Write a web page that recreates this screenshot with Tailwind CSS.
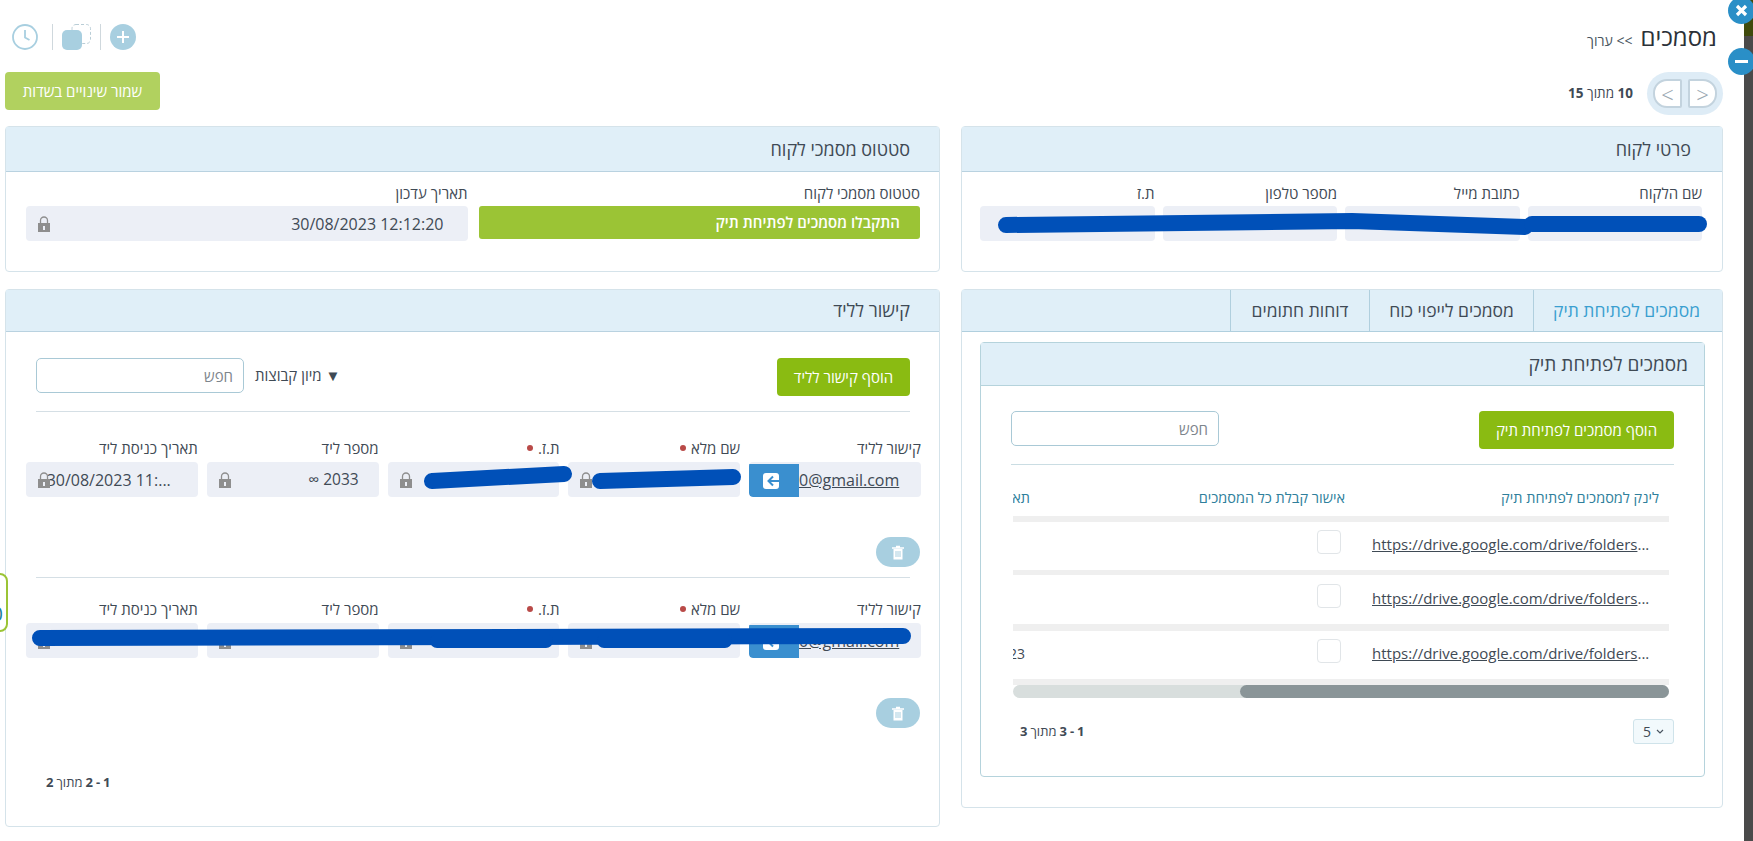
<!DOCTYPE html>
<html lang="he" dir="rtl">
<head>
  <meta charset="UTF-8">
  <title>מסמכים</title>
  <script src="https://cdn.jsdelivr.net/npm/@tailwindcss/browser@4"></script>
</head>
<body class="h-[841px] w-[1753px] overflow-hidden bg-white font-['Open_Sans','Noto_Sans',sans-serif] text-[#3f4a55]">
  <div class="relative flex h-[841px]">

    <!-- dark page behind the popup -->
    <div class="order-first h-[841px] w-[9px] shrink-0 bg-[#4a4a4a]">
      <div class="h-[36px] bg-[#3f4a0c]"></div>
    </div>

    <!-- popup -->
    <main class="w-[1744px] shrink-0 pr-[21px] pl-[5px]">
      <!-- title row -->
      <div class="flex h-[72px] items-start justify-between">
        <div class="flex items-baseline gap-2 pt-[19px] pr-[6px]">
          <h1 class="text-[24px] leading-[36px] text-[#2b3138]">מסמכים</h1>
          <span class="text-[14px] text-[#4a5560]">&gt;&gt; ערוך</span>
        </div>
        <div class="flex items-center pt-[24px] pl-[7px]">
          <svg class="h-[26px] w-[26px]" viewBox="0 0 26 26" fill="none"><circle cx="13" cy="13" r="13" fill="#a8cfe0"/><path d="M13 7v12M7 13h12" stroke="#fff" stroke-width="2"/></svg>
          <div class="mr-[9px] ml-[9px] h-[26px] w-px bg-[#cfd8dd]"></div>
          <svg class="h-[26px] w-[29px]" viewBox="0 0 29 26" fill="none"><rect x="10" y="0.500" width="18.500" height="19" rx="4" stroke="#b9cdd6" stroke-dasharray="3 2"/><rect x="0" y="6" width="20" height="20" rx="5" fill="#a8cfe0"/></svg>
          <div class="mr-[9px] ml-[14px] h-[26px] w-px bg-[#cfd8dd]"></div>
          <svg class="h-[26px] w-[26px]" viewBox="0 0 26 26" fill="none"><circle cx="13" cy="13" r="12" stroke="#a8cfe0" stroke-width="1.800"/><path d="M13 6v7.500l4.500 2.500" stroke="#a8cfe0" stroke-width="1.800"/></svg>
        </div>
      </div>

      <!-- paging + save -->
      <div class="flex h-[54px] items-start justify-between">
        <div class="flex items-center gap-[14px]">
          <div class="flex h-[43px] w-[76px] items-center justify-center gap-[6px] rounded-full bg-[#deecf6]">
            <button dir="ltr" class="h-[29px] w-[29px] rounded-r-[14px] rounded-l-[2px] border-2 border-[#c3d3de] bg-white text-[22px] leading-none font-light text-[#98a6b0]">&gt;</button>
            <button dir="ltr" class="h-[29px] w-[29px] rounded-l-[14px] rounded-r-[2px] border-2 border-[#c3d3de] bg-white text-[22px] leading-none font-light text-[#98a6b0]">&lt;</button>
          </div>
          <span class="text-[13.500px] text-[#3f4a55]"><b>10</b> מתוך <b>15</b></span>
        </div>
        <button class="h-[38px] w-[155px] rounded-[4px] bg-[#b1d15f] text-[15px] font-medium text-white">שמור שינויים בשדות</button>
      </div>

      <!-- two columns -->
      <div class="grid grid-cols-[762px_935px] gap-[21px]">

        <!-- right column -->
        <div class="flex flex-col gap-[17px]">
          <section class="relative h-[146px] rounded-[4px] border border-[#d5e3ea]">
            <div class="flex h-[45px] items-center border-b border-[#b9d2e0] bg-[#e0eff8] pr-[31px] text-[18px]">פרטי לקוח</div>
            <div class="grid grid-cols-4 gap-[8px] pt-[12px] pr-[20px] pl-[18px]">
              <div><label class="mb-[4px] block text-[15px] leading-[18px]">שם הלקוח</label><div class="h-[35px] rounded-[4px] bg-[#eceff6]"></div></div>
              <div><label class="mb-[4px] block text-[15px] leading-[18px]">כתובת מייל</label><div class="h-[35px] rounded-[4px] bg-[#eceff6]"></div></div>
              <div><label class="mb-[4px] block text-[15px] leading-[18px]">מספר טלפון</label><div class="h-[35px] rounded-[4px] bg-[#eceff6]"></div></div>
              <div><label class="mb-[4px] block text-[15px] leading-[18px]">ת.ז</label><div class="h-[35px] rounded-[4px] bg-[#eceff6]"></div></div>
            </div>
            <!-- scribble over the client details -->
            <svg class="absolute top-0 left-0 h-[146px] w-[760px]" viewBox="0 0 760 146" fill="none"><path d="M44 98L390 94L563 100" stroke="#0050b8" stroke-width="16" stroke-linecap="round" stroke-linejoin="round"/><path d="M570 97H737" stroke="#0050b8" stroke-width="16" stroke-linecap="round"/></svg>
          </section>

          <section class="h-[519px] rounded-[4px] border border-[#d5e3ea]">
            <div class="flex h-[42px] border-b border-[#b0cfde] bg-[#e0eff8] text-[17.500px]">
              <div class="flex w-[189px] items-center border-l border-[#b0cfde] pr-[22px] text-[#3a9fd0]">מסמכים לפתיחת תיק</div>
              <div class="flex w-[164px] items-center justify-center border-l border-[#b0cfde]">מסמכים לייפוי כוח</div>
              <div class="flex w-[139px] items-center justify-center border-l border-[#b0cfde]">דוחות חתומים</div>
            </div>

            <div class="mt-[10px] mr-[17px] ml-[18px] h-[435px] rounded-[4px] border border-[#b5d3dc]">
              <div class="flex h-[43px] items-center border-b border-[#b5d3dc] bg-[#e0eff8] pr-[16px] text-[19px]">מסמכים לפתיחת תיק</div>
              <div class="flex items-start justify-between pt-[25px] pr-[30px] pl-[30px]">
                <button class="h-[38px] w-[195px] rounded-[4px] bg-[#8abb12] text-[15px] font-medium text-white">הוסף מסמכים לפתיחת תיק</button>
                <input class="h-[35px] w-[208px] rounded-[5px] border border-[#a9c9d6] px-[10px] text-[15px] placeholder:text-[#7d858c]" placeholder="חפש">
              </div>
              <div class="mx-[30px] mt-[15px] h-px bg-[#cadde3]"></div>

              <!-- table -->
              <div class="mt-[15px] mr-[35px] ml-[35px] w-[656px] overflow-hidden">
                <div class="flex h-[36px] items-center text-[14.500px] whitespace-nowrap text-[#2f7f9c]">
                  <div class="w-[324px] pr-[10px]">לינק למסמכים לפתיחת תיק</div>
                  <div class="w-[315px]">אישור קבלת כל המסמכים</div>
                  <div class="w-[17px] overflow-hidden">תאריך</div>
                </div>
                <div class="bg-[#efefef] pt-[6px]">
                  <div class="flex h-[48px] items-center bg-white">
                    <div class="mr-[21px] mb-[3px] w-[276px] text-[15px] whitespace-nowrap" dir="ltr"><a class="underline">https://drive.google.com/drive/folders</a>...</div>
                    <div class="mr-[31px] mb-[8px] h-[24px] w-[24px] rounded-[4px] border border-[#e1e5e8] bg-white"></div>
                  </div>
                  <div class="mt-[5px] flex h-[49px] items-center bg-white">
                    <div class="mr-[21px] mb-[3px] w-[276px] text-[15px] whitespace-nowrap" dir="ltr"><a class="underline">https://drive.google.com/drive/folders</a>...</div>
                    <div class="mr-[31px] mb-[8px] h-[24px] w-[24px] rounded-[4px] border border-[#e1e5e8] bg-white"></div>
                  </div>
                  <div class="mt-[7px] flex h-[48px] items-center bg-white">
                    <div class="mr-[21px] mb-[3px] w-[276px] text-[15px] whitespace-nowrap" dir="ltr"><a class="underline">https://drive.google.com/drive/folders</a>...</div>
                    <div class="mr-[31px] mb-[8px] h-[24px] w-[24px] rounded-[4px] border border-[#e1e5e8] bg-white"></div>
                    <div class="mr-auto mb-[3px] w-[12px] overflow-hidden text-[14px] whitespace-nowrap" dir="rtl">23</div>
                  </div>
                  <div class="h-[6px]"></div>
                </div>
                <div class="flex h-[13px] justify-start rounded-full bg-[#d8dedd]">
                  <div class="h-[13px] w-[429px] rounded-full bg-[#8a9598]"></div>
                </div>
              </div>

              <div class="mt-[21px] flex items-center justify-between pr-[30px] pl-[39px]">
                <div class="flex h-[25px] w-[41px] items-center justify-center gap-[5px] rounded-[3px] border border-[#cfe3ea] bg-[#f2f9fc] text-[14px]"><svg class="h-[6px] w-[8px]" viewBox="0 0 8 6" fill="none"><path d="M1 1l3 3 3-3" stroke="#4a5560" stroke-width="1.200"/></svg><span>5</span></div>
                <span class="flex gap-[3px] text-[13px]"><b>1</b><b>-</b><b>3</b><span>מתוך</span><b>3</b></span>
              </div>
            </div>
          </section>
        </div>

        <!-- left column -->
        <div class="flex flex-col gap-[17px]">
          <section class="h-[146px] rounded-[4px] border border-[#d5e3ea]">
            <div class="flex h-[45px] items-center border-b border-[#b9d2e0] bg-[#e0eff8] pr-[29px] text-[18px]">סטטוס מסמכי לקוח</div>
            <div class="grid grid-cols-2 gap-[11px] pt-[12px] pr-[19px] pl-[20px]">
              <div>
                <label class="mb-[4px] block text-[15px] leading-[18px]">סטטוס מסמכי לקוח</label>
                <div class="mt-px flex h-[33px] items-center rounded-[3px] bg-[#9bc435] pr-[20px] text-[15px] font-semibold text-white">התקבלו מסמכים לפתיחת תיק</div>
              </div>
              <div>
                <label class="mb-[4px] block text-[15px] leading-[18px]">תאריך עדכון</label>
                <div class="flex h-[35px] items-center justify-between rounded-[4px] bg-[#eceff6] pr-[24px] pl-[12px] text-[16px]">
                  <span dir="ltr">30/08/2023 12:12:20</span>
                  <svg class="h-[16px] w-[12px]" viewBox="0 0 12 16" fill="none"><path d="M2.500 8V4.500a3.500 3.500 0 0 1 7 0V8" stroke="#8e8e8e" stroke-width="1.300"/><path fill-rule="evenodd" d="M0 7h12v9H0zM5 10h2v4H5z" fill="#8e8e8e"/></svg>
                </div>
              </div>
            </div>
          </section>

          <section class="relative h-[538px] rounded-[4px] border border-[#d5e3ea]">
            <div class="flex h-[42px] items-center border-b border-[#b9d2e0] bg-[#e0eff8] pr-[29px] text-[18px]">קישור לליד</div>

            <div class="flex items-start justify-between pt-[26px] pr-[29px] pl-[30px]">
              <button class="h-[38px] w-[133px] rounded-[4px] bg-[#8abb12] text-[15px] font-medium text-white">הוסף קישור לליד</button>
              <div class="flex items-center gap-[11px]">
                <span class="text-[15px]">▼ מיון קבוצות</span>
                <input class="h-[35px] w-[208px] rounded-[5px] border border-[#a9c9d6] px-[10px] text-[15px] placeholder:text-[#7d858c]" placeholder="חפש">
              </div>
            </div>
            <div class="mt-[15px] mr-[29px] ml-[30px] h-px bg-[#d5dfe5]"></div>

            <!-- lead row 1 -->
            <div class="grid grid-cols-5 gap-[9px] pt-[26px] pr-[18px] pl-[20px]">
              <div>
                <label class="mb-[4px] block text-[15px] leading-[20px]">קישור לליד</label>
                <div class="flex h-[35px] items-center overflow-hidden rounded-[4px] bg-[#eceff6] pr-[20px]">
                  <a class="w-[102px] shrink-0 overflow-hidden text-[16px] whitespace-nowrap underline" dir="ltr">0@gmail.com</a>
                  <div class="mt-[2px] flex h-[33px] w-[50px] items-center justify-center rounded-bl-[4px] bg-[#3a8fcf]">
                    <svg class="h-[20px] w-[22px]" viewBox="0 0 22 20" fill="none"><rect width="16" height="16" y="2" rx="3" fill="#fff"/><path d="M21 10H6M10 5.500L5.500 10l4.500 4.500" stroke="#3a8fcf" stroke-width="2"/></svg>
                  </div>
                </div>
              </div>
              <div>
                <label class="mb-[4px] flex items-center gap-[5px] text-[15px] leading-[20px]">שם מלא <i class="h-[6px] w-[6px] rounded-full bg-[#b94a48]"></i></label>
                <div class="flex h-[35px] items-center justify-end rounded-[4px] bg-[#eceff6] pl-[12px]">
                  <svg class="h-[16px] w-[12px]" viewBox="0 0 12 16" fill="none"><path d="M2.500 8V4.500a3.500 3.500 0 0 1 7 0V8" stroke="#8e8e8e" stroke-width="1.300"/><path fill-rule="evenodd" d="M0 7h12v9H0zM5 10h2v4H5z" fill="#8e8e8e"/></svg>
                </div>
              </div>
              <div>
                <label class="mb-[4px] flex items-center gap-[5px] text-[15px] leading-[20px]">ת.ז. <i class="h-[6px] w-[6px] rounded-full bg-[#b94a48]"></i></label>
                <div class="flex h-[35px] items-center justify-end rounded-[4px] bg-[#eceff6] pl-[12px]">
                  <svg class="h-[16px] w-[12px]" viewBox="0 0 12 16" fill="none"><path d="M2.500 8V4.500a3.500 3.500 0 0 1 7 0V8" stroke="#8e8e8e" stroke-width="1.300"/><path fill-rule="evenodd" d="M0 7h12v9H0zM5 10h2v4H5z" fill="#8e8e8e"/></svg>
                </div>
              </div>
              <div>
                <label class="mb-[4px] block text-[15px] leading-[20px]">מספר ליד</label>
                <div class="flex h-[35px] items-center justify-between rounded-[4px] bg-[#eceff6] pr-[20px] pl-[12px]">
                  <span class="text-[15.500px]" dir="ltr">∞ 2033</span>
                  <svg class="h-[16px] w-[12px]" viewBox="0 0 12 16" fill="none"><path d="M2.500 8V4.500a3.500 3.500 0 0 1 7 0V8" stroke="#8e8e8e" stroke-width="1.300"/><path fill-rule="evenodd" d="M0 7h12v9H0zM5 10h2v4H5z" fill="#8e8e8e"/></svg>
                </div>
              </div>
              <div>
                <label class="mb-[4px] block text-[15px] leading-[20px]">תאריך כניסת ליד</label>
                <div class="relative flex h-[35px] items-center rounded-[4px] bg-[#eceff6] pr-[27px]">
                  <span class="text-[16px] whitespace-nowrap" dir="ltr">30/08/2023 11:...</span>
                  <svg class="absolute top-[10px] left-[12px] h-[16px] w-[12px]" viewBox="0 0 12 16" fill="none"><path d="M2.500 8V4.500a3.500 3.500 0 0 1 7 0V8" stroke="#8e8e8e" stroke-width="1.300"/><path fill-rule="evenodd" d="M0 7h12v9H0zM5 10h2v4H5z" fill="#8e8e8e"/></svg>
                </div>
              </div>
            </div>
            <div class="mt-[40px] flex justify-start pr-[19px]">
              <button class="flex h-[30px] w-[44px] items-center justify-center rounded-full bg-[#a8cfe0]">
                <svg class="h-[15px] w-[12px]" viewBox="0 0 12 15" fill="none"><path d="M4 2V1h4v1M0 2.500h12M1.500 4h9v10.500h-9z" fill="#fff"/><path d="M0 3h12M4 1.500h4" stroke="#fff" stroke-width="1.500"/><path d="M4 6v6M6 6v6M8 6v6" stroke="#a8cfe0"/></svg>
              </button>
            </div>
            <div class="mt-[10px] mr-[29px] ml-[30px] h-px bg-[#d5dfe5]"></div>

            <!-- lead row 2 -->
            <div class="grid grid-cols-5 gap-[9px] pt-[21px] pr-[18px] pl-[20px]">
              <div>
                <label class="mb-[4px] block text-[15px] leading-[20px]">קישור לליד</label>
                <div class="flex h-[35px] items-center overflow-hidden rounded-[4px] bg-[#eceff6] pr-[20px]">
                  <a class="w-[102px] shrink-0 overflow-hidden text-[16px] whitespace-nowrap underline" dir="ltr">0@gmail.com</a>
                  <div class="mt-[2px] flex h-[33px] w-[50px] items-center justify-center rounded-bl-[4px] bg-[#3a8fcf]">
                    <svg class="h-[20px] w-[22px]" viewBox="0 0 22 20" fill="none"><rect width="16" height="16" y="2" rx="3" fill="#fff"/><path d="M21 10H6M10 5.500L5.500 10l4.500 4.500" stroke="#3a8fcf" stroke-width="2"/></svg>
                  </div>
                </div>
              </div>
              <div>
                <label class="mb-[4px] flex items-center gap-[5px] text-[15px] leading-[20px]">שם מלא <i class="h-[6px] w-[6px] rounded-full bg-[#b94a48]"></i></label>
                <div class="flex h-[35px] items-center justify-end rounded-[4px] bg-[#eceff6] pl-[12px]">
                  <svg class="h-[16px] w-[12px]" viewBox="0 0 12 16" fill="none"><path d="M2.500 8V4.500a3.500 3.500 0 0 1 7 0V8" stroke="#8e8e8e" stroke-width="1.300"/><path fill-rule="evenodd" d="M0 7h12v9H0zM5 10h2v4H5z" fill="#8e8e8e"/></svg>
                </div>
              </div>
              <div>
                <label class="mb-[4px] flex items-center gap-[5px] text-[15px] leading-[20px]">ת.ז. <i class="h-[6px] w-[6px] rounded-full bg-[#b94a48]"></i></label>
                <div class="flex h-[35px] items-center justify-end rounded-[4px] bg-[#eceff6] pl-[12px]">
                  <svg class="h-[16px] w-[12px]" viewBox="0 0 12 16" fill="none"><path d="M2.500 8V4.500a3.500 3.500 0 0 1 7 0V8" stroke="#8e8e8e" stroke-width="1.300"/><path fill-rule="evenodd" d="M0 7h12v9H0zM5 10h2v4H5z" fill="#8e8e8e"/></svg>
                </div>
              </div>
              <div>
                <label class="mb-[4px] block text-[15px] leading-[20px]">מספר ליד</label>
                <div class="flex h-[35px] items-center justify-end rounded-[4px] bg-[#eceff6] pl-[12px]">
                  <svg class="h-[16px] w-[12px]" viewBox="0 0 12 16" fill="none"><path d="M2.500 8V4.500a3.500 3.500 0 0 1 7 0V8" stroke="#8e8e8e" stroke-width="1.300"/><path fill-rule="evenodd" d="M0 7h12v9H0zM5 10h2v4H5z" fill="#8e8e8e"/></svg>
                </div>
              </div>
              <div>
                <label class="mb-[4px] block text-[15px] leading-[20px]">תאריך כניסת ליד</label>
                <div class="flex h-[35px] items-center justify-end rounded-[4px] bg-[#eceff6] pl-[12px]">
                  <svg class="h-[16px] w-[12px]" viewBox="0 0 12 16" fill="none"><path d="M2.500 8V4.500a3.500 3.500 0 0 1 7 0V8" stroke="#8e8e8e" stroke-width="1.300"/><path fill-rule="evenodd" d="M0 7h12v9H0zM5 10h2v4H5z" fill="#8e8e8e"/></svg>
                </div>
              </div>
            </div>
            <div class="mt-[40px] flex justify-start pr-[19px]">
              <button class="flex h-[30px] w-[44px] items-center justify-center rounded-full bg-[#a8cfe0]">
                <svg class="h-[15px] w-[12px]" viewBox="0 0 12 15" fill="none"><path d="M4 2V1h4v1M0 2.500h12M1.500 4h9v10.500h-9z" fill="#fff"/><path d="M0 3h12M4 1.500h4" stroke="#fff" stroke-width="1.500"/><path d="M4 6v6M6 6v6M8 6v6" stroke="#a8cfe0"/></svg>
              </button>
            </div>

            <div class="mt-[45px] flex justify-end gap-[3px] pl-[40px] text-[13px]"><b>1</b><b>-</b><b>2</b><span>מתוך</span><b>2</b></div>

            <!-- scribbles over the lead rows -->
            <svg class="absolute top-0 left-0 h-[536px] w-[933px]" viewBox="0 0 933 536" fill="none">
              <path d="M426 191L558 184" stroke="#0050b8" stroke-width="16" stroke-linecap="round"/>
              <path d="M594 191L727 187" stroke="#0050b8" stroke-width="16" stroke-linecap="round"/>
              <path d="M34 348L897 346" stroke="#0050b8" stroke-width="16" stroke-linecap="round"/>
              <path d="M431 351H540M598 351H719" stroke="#0050b8" stroke-width="14" stroke-linecap="round"/>
            </svg>
          </section>
        </div>
      </div>
    </main>

    <!-- popup close / minimise -->
    <button class="absolute top-[-3px] left-[1728px] flex h-[27px] w-[27px] items-center justify-center rounded-full bg-[#2a8fc7]">
      <svg class="h-[13px] w-[13px]" viewBox="0 0 13 13" fill="none"><path d="M2 2l9 9M11 2l-9 9" stroke="#fff" stroke-width="3.200"/></svg>
    </button>
    <button class="absolute top-[48px] left-[1728px] flex h-[27px] w-[27px] items-center justify-center rounded-full bg-[#2a8fc7]">
      <span class="block h-[3px] w-[13px] bg-white"></span>
    </button>

    <!-- side tab poking in from the left -->
    <div class="absolute top-[573px] left-[-8px] flex h-[59px] w-[16px] flex-col justify-end overflow-hidden rounded-r-[8px] border-2 border-[#9bc435] bg-white pr-[3px] pb-[6px]">
      <span class="text-[20px] leading-none text-[#1a7f9c]">0</span>
    </div>
  </div>
</body>
</html>
